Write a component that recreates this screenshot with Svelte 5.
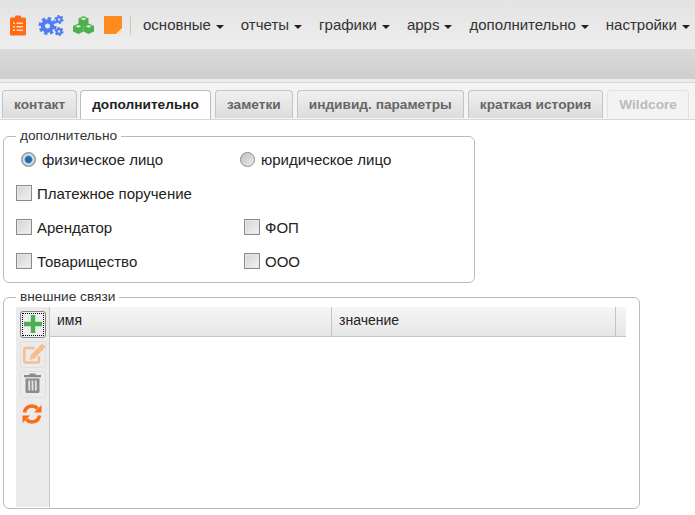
<script>
  const menus = ['основные', 'отчеты', 'графики', 'apps', 'дополнительно', 'настройки'];
  const tabs = [
    { label: 'контакт' },
    { label: 'дополнительно', active: true },
    { label: 'заметки' },
    { label: 'индивид. параметры' },
    { label: 'краткая история' },
    { label: 'Wildcore', disabled: true }
  ];
</script>

<div class="page">
  <nav class="topbar">
    <div class="icons">
      <svg class="ic-clip" viewBox="0 0 16 21" width="16" height="21">
        <path fill="#ff6a13" d="M1.500 2.500H5V1.500a1 1 0 0 1 1-1h4a1 1 0 0 1 1 1v1h3.500a1.500 1.500 0 0 1 1.500 1.500v15a1.500 1.500 0 0 1-1.500 1.500h-13A1.500 1.500 0 0 1 0 19V4a1.500 1.500 0 0 1 1.500-1.500z"/>
        <path fill="#ffd9bf" d="M3 7.500h2v1.500H3zM6.500 7.500H13v1.500H6.500zM3 11h2v1.500H3zM6.500 11H13v1.500H6.500zM3 14.500h2V16H3zM6.500 14.500H13V16H6.500z"/>
      </svg>
      <svg class="ic-gears" viewBox="0 0 26 21" width="26" height="21">
        <g fill="none" stroke="#4f7df5">
          <circle cx="9.500" cy="11" r="4.600" stroke-width="4.200"/>
          <circle cx="9.500" cy="11" r="7.500" stroke-width="3" stroke-dasharray="3.300 2.590"/>
          <circle cx="21" cy="4.500" r="2.300" stroke-width="2.200"/>
          <circle cx="21" cy="4.500" r="3.700" stroke-width="1.800" stroke-dasharray="1.900 1.970"/>
          <circle cx="21" cy="16.500" r="2.300" stroke-width="2.200"/>
          <circle cx="21" cy="16.500" r="3.700" stroke-width="1.800" stroke-dasharray="1.900 1.970"/>
        </g>
      </svg>
      <svg class="ic-boxes" viewBox="0 0 21 18" width="21" height="18">
        <g fill="#4caf50">
          <path d="M10.500 0l5 2.500v5.500l-5 2.500-5-2.500V2.500z"/>
          <path d="M5.500 7.500l5 2.500v5.500l-5 2.500-5.500-2.500V10z"/>
          <path d="M15.500 7.500l5.500 2.500v5.500L15.500 18l-5-2.500V10z"/>
        </g>
        <path fill="#d7f0d4" d="M10.500 1.500l3 1.300-3 1.400-3-1.400zM5.300 9l3 1.300-3 1.400-3-1.400zM15.700 9l3 1.300-3 1.400-3-1.400z"/>
      </svg>
      <svg class="ic-note" viewBox="0 0 18 18" width="18" height="18">
        <path fill="#ff8a1e" d="M0 1a1 1 0 0 1 1-1h16a1 1 0 0 1 1 1v11l-6 6H1a1 1 0 0 1-1-1z"/>
        <path fill="#ffe3c4" d="M18 12.500V17a1 1 0 0 1-1 1h-4.500z"/>
      </svg>
    </div>
    <ul class="menu">
      {#each menus as m}
        <li>{m}<span class="caret"></span></li>
      {/each}
    </ul>
  </nav>
  <div class="band"></div>
  <div class="strip"></div>

  <div class="tabs">
    {#each tabs as t}
      <div class="tab" class:active={t.active} class:disabled={t.disabled}>{t.label}</div>
    {/each}
  </div>

  <fieldset class="box first">
    <legend>дополнительно</legend>
    <div class="inner">
      <div class="row radios">
        <label class="opt c1"><span class="radio on"></span>физическое лицо</label>
        <label class="opt"><span class="radio"></span>юридическое лицо</label>
      </div>
      <div class="row">
        <label class="opt"><span class="check"></span>Платежное поручение</label>
      </div>
      <div class="row">
        <label class="opt col"><span class="check"></span>Арендатор</label>
        <label class="opt"><span class="check"></span>ФОП</label>
      </div>
      <div class="row">
        <label class="opt col"><span class="check"></span>Товарищество</label>
        <label class="opt"><span class="check"></span>ООО</label>
      </div>
    </div>
  </fieldset>

  <fieldset class="box second">
    <legend>внешние связи</legend>
    <div class="grid">
      <div class="tools">
        <div class="tool focus">
          <svg class="plus" viewBox="0 0 18 18" width="18" height="18"><path fill="#4caf50" d="M6.800 0h4.400v6.800H18v4.400h-6.800V18H6.800v-6.800H0V6.800h6.800z"/></svg>
        </div>
        <div class="tool off">
          <svg class="edit" viewBox="0 0 23 21" width="23" height="21">
            <path fill="none" stroke="#f7bd8c" stroke-width="2.500" d="M16 13v5a1.500 1.500 0 0 1-1.500 1.500H2.800A1.500 1.500 0 0 1 1.300 18V6.500A1.500 1.500 0 0 1 2.800 5h9"/>
            <path fill="#f7bd8c" d="M19 .5l3.500 3.500L11.500 15.500l-5 1.500 1.300-5z"/>
          </svg>
        </div>
        <div class="tool off">
          <svg class="trash" viewBox="0 0 17 20" width="17" height="20">
            <path fill="#8c8c8c" d="M0 2h5.500V.5h6V2H17v2.300H0zM1.500 5.500h14v13a1.500 1.500 0 0 1-1.500 1.500H3a1.500 1.500 0 0 1-1.500-1.500z"/>
            <path fill="#e4e4e4" d="M4.300 7.500h1.800v10H4.300zM7.600 7.500h1.800v10H7.600zM10.900 7.500h1.800v10h-1.800z"/>
          </svg>
        </div>
        <div class="tool plain">
          <svg class="sync" viewBox="0 0 20 20" width="20" height="20">
            <path fill="none" stroke="#ff6a13" stroke-width="3.500" d="M2.500 8.500A7.500 7.500 0 0 1 15.500 4.500M17.500 11.500A7.500 7.500 0 0 1 4.500 15.500"/>
            <path fill="#ff6a13" d="M19.500 1v7.500H12zM.5 19v-7.500H8z"/>
          </svg>
        </div>
      </div>
      <div class="table">
        <div class="thead">
          <div class="th name">имя</div>
          <div class="th value">значение</div>
          <div class="th rest"></div>
        </div>
      </div>
    </div>
  </fieldset>
</div>

<style>
  :global(body) {
    margin: 0;
    background: #fff;
  }
  .page {
    width: 695px;
    height: 515px;
    overflow: hidden;
    font-family: 'Liberation Sans', Arial, sans-serif;
    font-size: 14px;
    color: #222;
  }
  .topbar {
    height: 49px;
    display: flex;
    align-items: center;
    background: linear-gradient(#e3e3e3, #eeeeee);
    white-space: nowrap;
  }
  .icons {
    display: flex;
    align-items: center;
    height: 19px;
    padding-left: 10px;
    width: 131px;
    flex: none;
    box-sizing: border-box;
    border-right: 1px solid #c8c8c0;
    margin-right: 12px;
    margin-top: 1px;
  }
  .ic-clip { margin-right: 12px; }
  .ic-gears { margin-right: 9px; }
  .ic-boxes { margin-right: 10px; }
  .menu {
    display: flex;
    list-style: none;
    margin: 0;
    padding: 0;
    gap: 17px;
    font-size: 15px;
    color: #333;
  }
  .caret {
    display: inline-block;
    margin-left: 5px;
    vertical-align: 1px;
    border-top: 4px solid #222;
    border-left: 4px solid transparent;
    border-right: 4px solid transparent;
  }
  .band {
    height: 30px;
    background: linear-gradient(#dadada, #cecece);
  }
  .strip {
    height: 3px;
    background: #ececec;
  }
  .tabs {
    display: flex;
    gap: 4px;
    height: 38px;
    padding: 7px 0 0 2px;
    box-sizing: border-box;
    border-top: 1px solid #d8d8d8;
    border-bottom: 1px solid #d8d8d8;
    background: #f4f4f4;
    white-space: nowrap;
    overflow: hidden;
  }
  .tab {
    flex: none;
    height: 28px;
    line-height: 27px;
    padding: 0 11px;
    box-sizing: border-box;
    font-weight: bold;
    font-size: 13.700px;
    color: #666;
    border: 1px solid #c4c4c4;
    border-bottom: none;
    border-radius: 4px 4px 0 0;
    background: linear-gradient(#f0f0f0, #dcdcdc);
  }
  .tab.active {
    color: #222;
    background: #fff;
    border-color: #bbb;
    height: 30px;
    margin-left: -1px;
  }
  .tab.disabled {
    color: #bbb;
    background: #f3f3f3;
    border-color: #e2e2e2;
  }
  .box {
    margin: 0 0 0 3px;
    padding: 0;
    box-sizing: border-box;
    border: 1px solid #b9b9c6;
    border-radius: 6px;
  }
  .box legend {
    margin-left: 12px;
    padding: 0 4px 2px;
    font-size: 13.700px;
    line-height: 15px;
    color: #333;
  }
  .first {
    width: 472px;
    height: 155px;
    margin-top: 8px;
  }
  .second {
    width: 637px;
    height: 220px;
    margin-top: 6px;
  }
  .inner {
    padding: 4px 0 0 12px;
  }
  .row {
    display: flex;
    align-items: center;
    height: 34px;
  }
  .radios {
    height: 20px;
    margin-bottom: 7px;
  }
  .opt {
    display: flex;
    align-items: center;
    font-size: 15px;
    color: #222;
  }
  .col {
    width: 228px;
  }
  .c1 {
    width: 219px;
    margin-left: 5px;
  }
  .check {
    width: 14px;
    height: 14px;
    border: 1px solid #8a8a8a;
    margin-right: 5px;
    background: linear-gradient(135deg, #d4d4d4, #f2f2f2);
    box-shadow: inset 0 0 0 1px #e8e8e8;
  }
  .radio {
    width: 13px;
    height: 13px;
    border-radius: 50%;
    border: 1px solid #8a8a8a;
    margin-right: 6px;
    background: linear-gradient(135deg, #c0c0c0, #ececec);
  }
  .radio.on {
    background: radial-gradient(circle, #1f6fb0 0 3px, #dde6ee 4.500px, #a8a8a8 7px);
  }
  .grid {
    display: flex;
    height: 200px;
    margin: 1px 0 0 12px;
  }
  .tools {
    width: 33px;
    flex: none;
    background: #ebebeb;
    border-right: 1px solid #c9c9c9;
    display: flex;
    flex-direction: column;
    align-items: center;
    padding-top: 4px;
    gap: 3px;
  }
  .tool {
    width: 26px;
    height: 27px;
    box-sizing: border-box;
    display: flex;
    align-items: center;
    justify-content: center;
    border: 1px solid transparent;
    border-radius: 3px;
    flex: none;
  }
  .tool.focus {
    border-color: #888;
    outline: 1px dotted #000;
    outline-offset: -3px;
    background: #eee;
  }
  .tool.off {
    border-color: #e0e0e0;
  }
  .plus {
    margin-bottom: 2px;
  }
  .edit {
    margin: -2px -2px 0 1px;
  }
  .trash {
    margin-bottom: 3px;
  }
  .sync {
    margin: 0 0 2px -2px;
  }
  .table {
    flex: none;
    width: 576px;
  }
  .thead {
    display: flex;
    height: 30px;
    background: linear-gradient(#f6f6f6, #e6e6e6);
    border-bottom: 1px solid #c4c4c4;
    box-sizing: border-box;
  }
  .th {
    line-height: 27px;
    font-size: 14px;
    color: #222;
    box-sizing: border-box;
    padding-left: 7px;
  }
  .name {
    width: 282px;
    border-right: 1px solid #c4c4c4;
  }
  .value {
    width: 284px;
    border-right: 1px solid #c4c4c4;
  }
  .rest {
    flex: 1;
  }
</style>
